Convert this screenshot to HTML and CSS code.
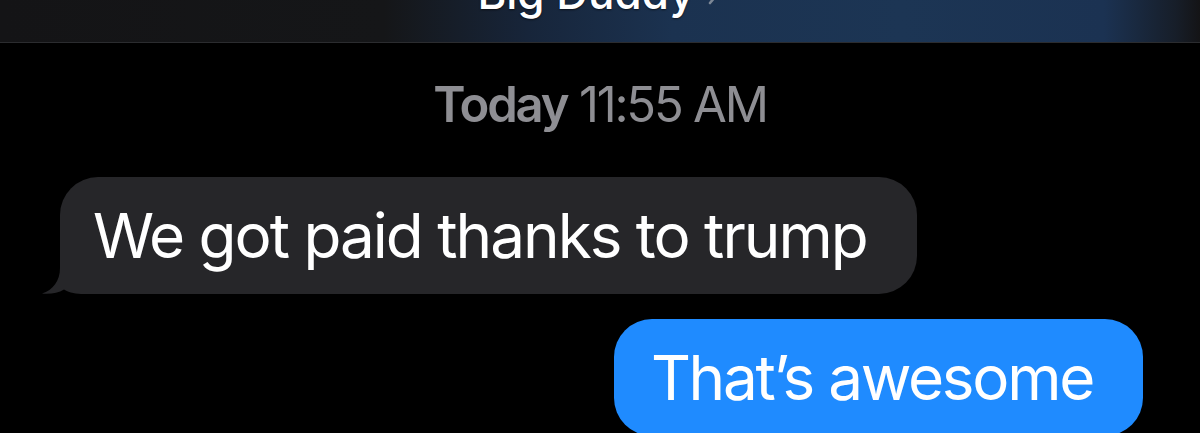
FILE: index.html
```html
<!DOCTYPE html>
<html lang="en">

<head>
    <meta charset="UTF-8">
    <meta name="viewport" content="width=device-width, initial-scale=1.0">
    <title>Big Duddy</title>

    <link rel="stylesheet" href="styles.css">
</head>

<body>
    <div class="header">
        <div class="contact">
            <span class="name">Big Duddy</span>
            <svg class="chevron" width="16" height="28" viewBox="0 0 16 28">
                <path d="M3 2 L13 14 L3 26" fill="none" stroke="#7d8896" stroke-width="2.6" stroke-linecap="round" stroke-linejoin="round" />
            </svg>
        </div>
    </div>

    <div class="thread">
        <div class="stamp"><b>Today</b> 11:55 AM</div>

        <div class="row incoming">
            <div class="bubble gray">
                We got paid thanks to trump
                <!-- tail -->
                <svg class="tail" width="60" height="44" viewBox="0 0 60 44">
                    <path d="M18 0 L18 18 C18 31 11 40 0 43.6 C9 44.3 16 43 22 39.5 C28 43 34 44 42 44 L60 44 L60 0 Z" fill="#262629" />
                </svg>
            </div>
        </div>

        <div class="row outgoing">
            <div class="bubble blue">That’s awesome</div>
        </div>
    </div>
</body>

</html>
```

FILE: styles.css
```css
body {
    margin: 0;
    padding: 0;
    background-color: #000;
    font-family: "Inter", "Roboto", sans-serif;
    overflow: hidden;
}

.header {
    height: 42px;
    border-bottom: 1px solid #2b2c2f;
    background: linear-gradient(90deg, #141416 0%, #151618 32%, #17253a 44%, #1b3250 56%, #1c3554 75%, #1b3252 92%, #171e29 98%, #141416 100%);
    overflow: hidden;
}

.contact {
    display: flex;
    justify-content: center;
    align-items: center;
    margin-top: -29px;
}

.name {
    color: #fff;
    font-size: 44px;
    line-height: 44px;
    font-weight: 500;
    text-shadow: 0 1px 2px rgba(0, 0, 0, 0.6);
}

.chevron {
    margin-left: 12px;
    margin-top: -4px;
}

.thread {
    display: flex;
    flex-direction: column;
}

.stamp {
    margin-top: 37px;
    text-align: center;
    color: #8e8e93;
    font-size: 49px;
    line-height: 49px;
    letter-spacing: -2.2px;
}

.stamp b {
    font-weight: 600;
}

.row {
    display: flex;
}

.incoming {
    margin-top: 48px;
    padding-left: 60px;
}

.outgoing {
    margin-top: 25px;
    justify-content: flex-end;
    padding-right: 57px;
}

.bubble {
    position: relative;
    font-size: 62px;
    line-height: 75px;
    letter-spacing: -2px;
    color: #fff;
    padding: 21px 50px 21px 33px;
    border-radius: 38px;
}

.gray {
    background-color: #262629;
}

.blue {
    background-color: #1f8bff;
    padding: 21px 50px 21px 37px;
    letter-spacing: -2.3px;
}

.tail {
    position: absolute;
    left: -18px;
    bottom: 0;
}
```
